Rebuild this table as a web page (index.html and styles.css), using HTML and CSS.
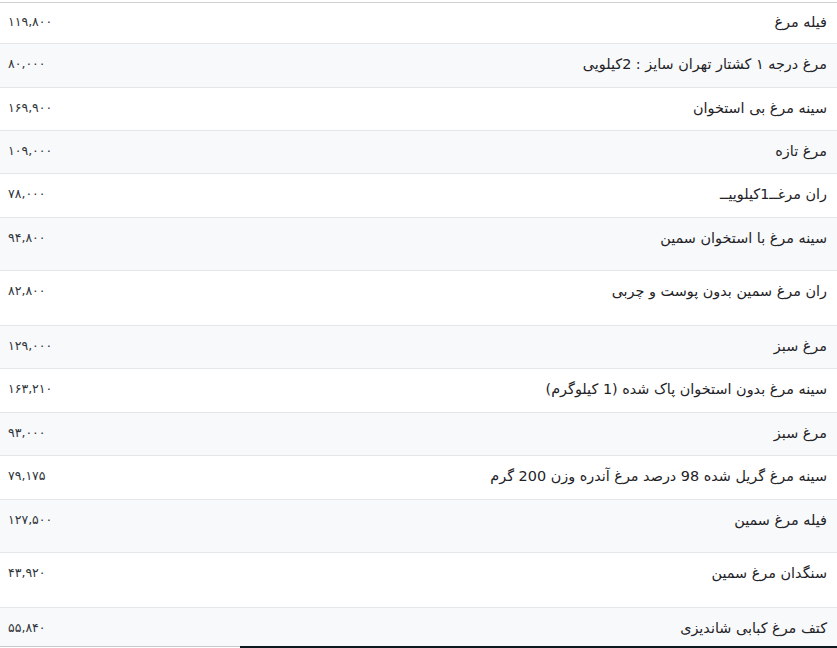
FILE: index.html
```html
<!DOCTYPE html>
<html lang="fa" dir="rtl">
<head>
<meta charset="utf-8">
<title>قیمت مرغ</title>
<link rel="stylesheet" href="styles.css">
</head>
<body>
<div class="table">
  <div class="row r-first"><span class="name">فیله مرغ</span><span class="price">۱۱۹,۸۰۰</span></div>
  <div class="row alt"><span class="name">مرغ درجه ۱ کشتار تهران سایز : 2کیلویی</span><span class="price">۸۰,۰۰۰</span></div>
  <div class="row"><span class="name">سینه مرغ بی استخوان</span><span class="price">۱۶۹,۹۰۰</span></div>
  <div class="row alt"><span class="name">مرغ تازه</span><span class="price">۱۰۹,۰۰۰</span></div>
  <div class="row"><span class="name">ران مرغــ1کیلوییــ</span><span class="price">۷۸,۰۰۰</span></div>
  <div class="row alt tall-a"><span class="name">سینه مرغ با استخوان سمین</span><span class="price">۹۴,۸۰۰</span></div>
  <div class="row tall-b"><span class="name">ران مرغ سمین بدون پوست و چربی</span><span class="price">۸۲,۸۰۰</span></div>
  <div class="row alt"><span class="name">مرغ سبز</span><span class="price">۱۲۹,۰۰۰</span></div>
  <div class="row"><span class="name">سینه مرغ بدون استخوان پاک شده (1 کیلوگرم)</span><span class="price">۱۶۳,۲۱۰</span></div>
  <div class="row alt"><span class="name">مرغ سبز</span><span class="price">۹۳,۰۰۰</span></div>
  <div class="row r-44"><span class="name">سینه مرغ گریل شده 98 درصد مرغ آندره وزن 200 گرم</span><span class="price">۷۹,۱۷۵</span></div>
  <div class="row alt tall-a"><span class="name">فیله مرغ سمین</span><span class="price">۱۲۷,۵۰۰</span></div>
  <div class="row tall-b"><span class="name">سنگدان مرغ سمین</span><span class="price">۴۳,۹۲۰</span></div>
  <div class="row alt r-last"><span class="name">کتف مرغ کبابی شاندیزی</span><span class="price">۵۵,۸۴۰</span></div>
</div>
<div class="bottom-bar"></div>
</body>
</html>
```
FILE: styles.css
```css
html, body {
  margin: 0;
  padding: 0;
  background: #ffffff;
}
body {
  font-family: "DejaVu Sans", "Noto Sans", sans-serif;
  color: #212529;
  height: 648px;
  overflow: hidden;
  position: relative;
}
.table {
  margin-top: 2px;
  border-top: 1px solid #d0d2d4;
  display: flex;
  flex-direction: column;
}
.row {
  box-sizing: border-box;
  height: 43.33px;
  border-bottom: 1px solid #e4e7ea;
  display: flex;
  justify-content: space-between;
  align-items: flex-start;
  padding: 10px 10px 0 8px;
  line-height: 20px;
  background: #ffffff;
}
.row.alt {
  background: #f8f9fa;
}
.r-first { height: 41.33px; padding-top: 9px; }
.r-44 { height: 44px; }
.tall-a { height: 53.33px; }
.tall-b { height: 55px; }
.r-last { height: 39px; border-bottom-color: #c9cacb; }
.name {
  font-size: 14.4px;
  color: #1f2327;
}
.price {
  font-size: 12.5px;
  color: #2f353a;
}
.bottom-bar {
  position: absolute;
  left: 240px;
  right: 0;
  top: 646px;
  height: 2px;
  background: #0c1a20;
}
```
